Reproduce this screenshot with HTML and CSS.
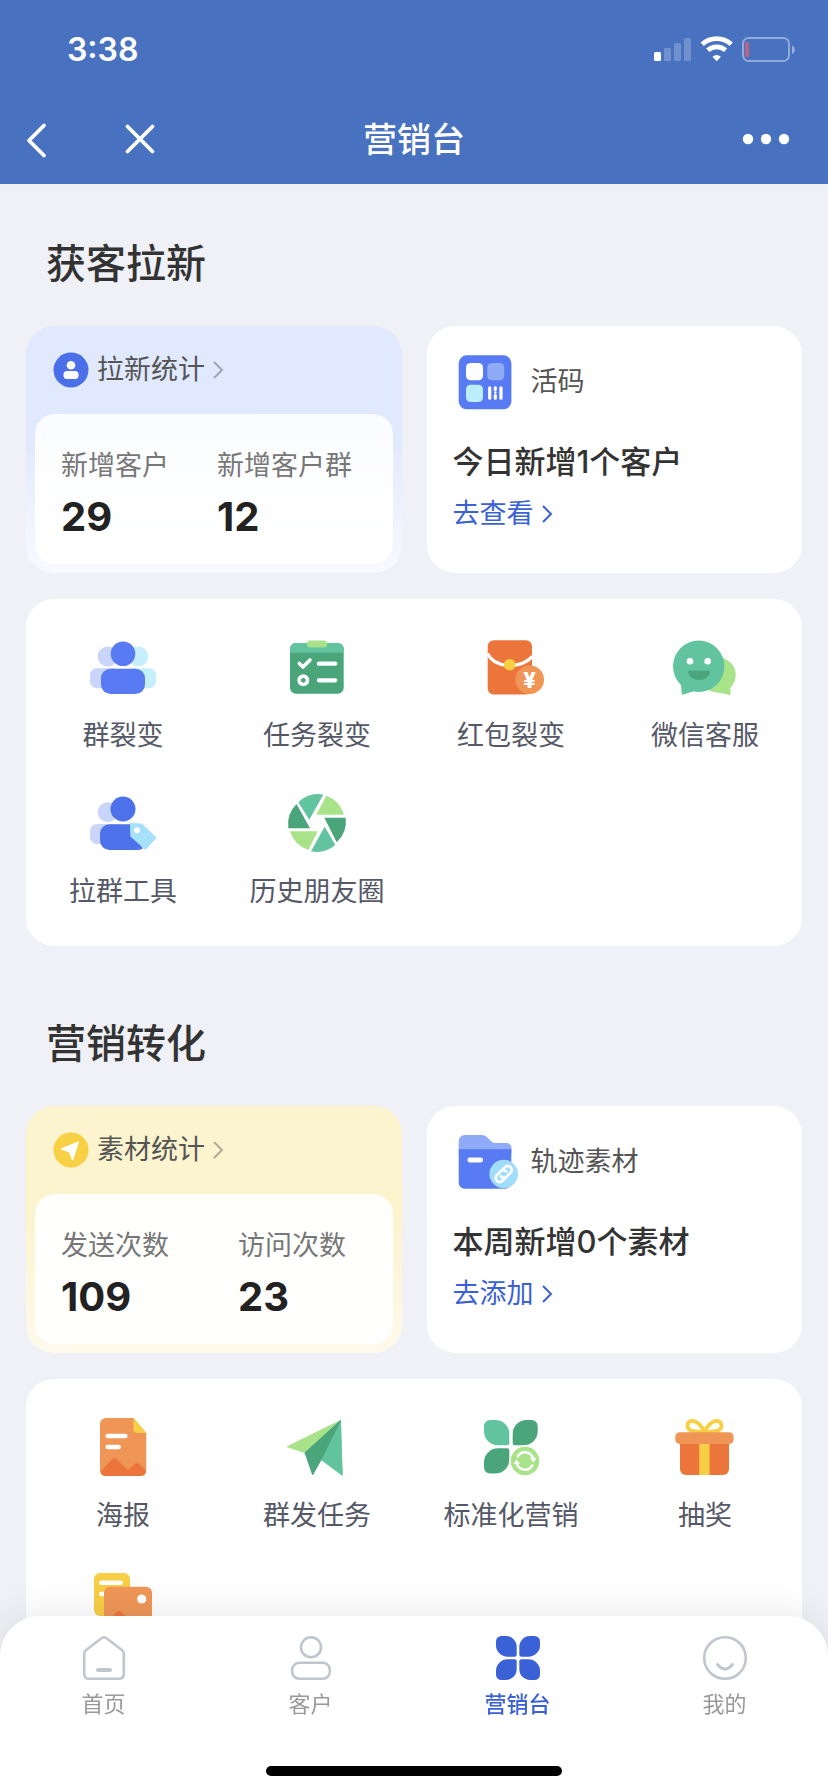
FILE: index.html
```html
<!DOCTYPE html>
<html lang="zh-CN">
<head>
<meta charset="utf-8">
<meta name="viewport" content="width=device-width, initial-scale=1">
<title>营销台</title>
<link rel="stylesheet" href="styles.css">
</head>
<body>
<div class="app">
  <header class="header">
    <div class="status">
      <span class="status-time">3:38</span>
      <svg class="status-icons" viewBox="0 0 142 28" aria-hidden="true">
        <rect x="0" y="16" width="7" height="9" rx="1.5" fill="#fff"/>
        <g fill="#fff" opacity=".22">
          <rect x="10" y="12" width="7" height="13" rx="1.5"/>
          <rect x="20" y="7" width="7" height="18" rx="1.5"/>
          <rect x="30" y="2" width="7" height="23" rx="1.5"/>
        </g>
        <g fill="none" stroke="#fff" stroke-width="4.800">
          <path d="M48.200 8.200A21.500 21.500 0 0 1 77.200 8.200"/>
          <path d="M53.800 14.300A13 13 0 0 1 71.600 14.300"/>
        </g>
        <path d="M62.700 25.200L58.500 20.700A6.500 6.500 0 0 1 66.900 20.700Z" fill="#fff"/>
        <rect x="89" y="2" width="46" height="23" rx="5.500" fill="none" stroke="#fff" stroke-opacity=".4" stroke-width="2"/>
        <path d="M138 9.500a4.600 4.600 0 0 1 0 8.500z" fill="#fff" opacity=".45"/>
        <rect x="91" y="6" width="4" height="15" rx="1" fill="#b8657f"/>
      </svg>
    </div>
    <div class="nav">
      <div class="nav-side">
        <button class="icon-btn" type="button" aria-label="返回">
          <svg viewBox="0 0 36 36"><path d="M26 3.500L11 18.500L26 33.500" fill="none" stroke="#fff" stroke-width="3.800" stroke-linecap="round" stroke-linejoin="round"/></svg>
        </button>
        <button class="icon-btn" type="button" aria-label="关闭">
          <svg viewBox="0 0 36 36"><path d="M5.500 4.500L30.500 29.500M30.500 4.500L5.500 29.500" fill="none" stroke="#fff" stroke-width="3.800" stroke-linecap="round"/></svg>
        </button>
      </div>
      <h1 class="nav-title">营销台</h1>
      <div class="nav-side nav-side-end">
        <button class="icon-btn icon-btn-wide" type="button" aria-label="更多">
          <svg viewBox="0 0 48 36"><g fill="#fff"><circle cx="6" cy="17" r="5.200"/><circle cx="24" cy="17" r="5.200"/><circle cx="42" cy="17" r="5.200"/></g></svg>
        </button>
      </div>
    </div>
  </header>

  <main class="content">
    <section class="section">
      <h2 class="section-title">获客拉新</h2>
      <div class="summary-row">
        <article class="stat-card stat-card-blue">
          <a class="stat-head" href="#">
            <svg class="stat-icon" viewBox="0 0 36 36" aria-hidden="true"><circle cx="18" cy="18" r="17.500" fill="#4a6fe9"/><circle cx="18" cy="13.300" r="4.300" fill="#fff"/><rect x="10.500" y="19" width="15" height="8" rx="3.500" fill="#fff"/></svg>
            <span>拉新统计</span>
            <svg class="chevron chevron-muted" viewBox="0 0 10 18" aria-hidden="true"><path d="M1 1L9 9L1 17"/></svg>
          </a>
          <dl class="stat-panel">
            <div class="stat"><dt>新增客户</dt><dd>29</dd></div>
            <div class="stat"><dt>新增客户群</dt><dd>12</dd></div>
          </dl>
        </article>
        <article class="info-card">
          <div class="info-head">
            <svg class="info-icon" viewBox="0 0 64 64" aria-hidden="true">
              <rect x="5.700" y="5.300" width="52.700" height="54" rx="8" fill="#587af2"/>
              <rect x="13" y="13" width="17" height="17.300" rx="4.500" fill="#fff"/>
              <rect x="34.300" y="13" width="17" height="17.300" rx="4.500" fill="#8faaf7"/>
              <rect x="13" y="34.700" width="17" height="17.300" rx="4.500" fill="#bbeefc"/>
              <path d="M36.700 37.800V48.200M48 37.800V48.200M42.300 37.800V39.500M42.300 45.500V48.200" stroke="#fff" stroke-width="3.200" stroke-linecap="round"/>
              <circle cx="42.300" cy="42.500" r="1.300" fill="#fff"/>
            </svg>
            <span>活码</span>
          </div>
          <h3 class="info-title">今日新增1个客户</h3>
          <a class="info-link" href="#">去查看<svg class="chevron" viewBox="0 0 10 18" aria-hidden="true"><path d="M1 1L9 9L1 17"/></svg></a>
        </article>
      </div>
      <nav class="tools" aria-label="获客拉新">
        <a class="tool" href="#">
          <svg viewBox="0 0 68 68" aria-hidden="true">
            <circle cx="18.700" cy="23.500" r="10" fill="#c9d5fa"/><rect x="1" y="35.300" width="30" height="20" rx="7" fill="#c9d5fa"/>
            <circle cx="49.300" cy="23.500" r="10" fill="#c6effd"/><rect x="37" y="35.300" width="30" height="20" rx="7" fill="#c6effd"/>
            <circle cx="34" cy="20.700" r="12.300" fill="#587af2"/><rect x="12" y="35.700" width="44" height="25.300" rx="9.500" fill="#587af2"/>
          </svg>
          <span>群裂变</span>
        </a>
        <a class="tool" href="#">
          <svg viewBox="0 0 68 68" aria-hidden="true">
            <rect x="7" y="10" width="53.700" height="50.700" rx="6" fill="#4aa57b"/>
            <path d="M7 19.700V16a6 6 0 0 1 6-6H54.700a6 6 0 0 1 6 6v3.700z" fill="#61c49e"/>
            <rect x="24" y="7.500" width="20" height="7" rx="3" fill="#a8e389"/>
            <g fill="none" stroke="#fff" stroke-width="3.600" stroke-linecap="round" stroke-linejoin="round"><path d="M16.300 30.500L20 34L27 27"/><circle cx="20.300" cy="47.300" r="4.200"/><path d="M35.800 30.700H52.300M35.800 47.300H52.300" stroke-width="4.200"/></g>
          </svg>
          <span>任务裂变</span>
        </a>
        <a class="tool" href="#">
          <svg viewBox="0 0 68 68" aria-hidden="true">
            <rect x="10.700" y="7.300" width="44.300" height="54.300" rx="6" fill="#ec753c"/>
            <path d="M10.500 20.500C17 34.500 42 37 55.500 23.500" fill="none" stroke="#fff" stroke-width="3.200"/>
            <circle cx="32.700" cy="31.700" r="5.800" fill="#f7cf45"/>
            <circle cx="52.700" cy="46.700" r="14.300" fill="#ef9657"/>
            <text class="coin-mark" x="52.700" y="54.500" text-anchor="middle">¥</text>
          </svg>
          <span>红包裂变</span>
        </a>
        <a class="tool" href="#">
          <svg viewBox="0 0 68 68" aria-hidden="true">
            <circle cx="47" cy="42" r="17.700" fill="#a8e389"/><path d="M48 59L59 61.500L58.500 50Z" fill="#a8e389" stroke="#a8e389" stroke-linejoin="round"/>
            <circle cx="27.700" cy="33.300" r="25.700" fill="#61c49e"/><path d="M10.500 50L11.300 61.300L22 58Z" fill="#61c49e" stroke="#61c49e" stroke-linejoin="round"/>
            <circle cx="19" cy="28.300" r="3.300" fill="#fff"/><circle cx="36.700" cy="28.300" r="3.300" fill="#fff"/>
            <path d="M17 37.700H39C38.500 50 17.500 50 17 37.700Z" fill="#4aa57b"/>
          </svg>
          <span>微信客服</span>
        </a>
        <a class="tool" href="#">
          <svg viewBox="0 0 68 68" aria-hidden="true">
            <circle cx="18.700" cy="23.300" r="10" fill="#c9d5fa"/><rect x="1" y="35" width="30" height="20" rx="7" fill="#c9d5fa"/>
            <circle cx="34" cy="20" r="12.500" fill="#4d71e8"/><path d="M20.500 35.300H44V46L54 59.500Q51 61 47 61H20.500A9.500 9.500 0 0 1 11 51.500V44.800A9.500 9.500 0 0 1 20.500 35.300Z" fill="#4d71e8"/>
            <path d="M42 35L52.500 35.500L66.300 48.700L56.300 59.500L42.300 47Z" fill="#a5e1fb" stroke="#a5e1fb" stroke-width="2" stroke-linejoin="round"/>
            <circle cx="48" cy="41.300" r="3" fill="#fff"/>
          </svg>
          <span>拉群工具</span>
        </a>
        <a class="tool" href="#">
          <svg viewBox="0 0 68 68" aria-hidden="true">
            <path d="M15.300 13.300A29 29 0 0 1 40.300 5.500L26.300 30.700Z" fill="#61c49e"/>
            <path d="M43.300 6.800A29 29 0 0 1 61 25.700H33.300Z" fill="#a8e389"/>
            <path d="M62.700 28.700A29 29 0 0 1 53.700 53.300L41.300 28.700Z" fill="#4aa57b"/>
            <path d="M52.300 56A29 29 0 0 1 28 62.300L41.700 37.700Z" fill="#61c49e"/>
            <path d="M25.300 61A29 29 0 0 1 7 42.300H34.700Z" fill="#a8e389"/>
            <path d="M5.300 39.300A29 29 0 0 1 13.500 15L27 39.300Z" fill="#4aa57b"/>
          </svg>
          <span>历史朋友圈</span>
        </a>
      </nav>
    </section>

    <section class="section">
      <h2 class="section-title">营销转化</h2>
      <div class="summary-row">
        <article class="stat-card stat-card-yellow">
          <a class="stat-head" href="#">
            <svg class="stat-icon" viewBox="0 0 36 36" aria-hidden="true"><circle cx="18" cy="18" r="17.500" fill="#f8d044"/><path d="M8.800 17L25.200 10.200L19.600 27.500L16.500 19.800Z" fill="#fff" stroke="#fff" stroke-width="1.500" stroke-linejoin="round"/></svg>
            <span>素材统计</span>
            <svg class="chevron chevron-muted" viewBox="0 0 10 18" aria-hidden="true"><path d="M1 1L9 9L1 17"/></svg>
          </a>
          <dl class="stat-panel stat-panel-loose">
            <div class="stat"><dt>发送次数</dt><dd>109</dd></div>
            <div class="stat"><dt>访问次数</dt><dd>23</dd></div>
          </dl>
        </article>
        <article class="info-card">
          <div class="info-head">
            <svg class="info-icon" viewBox="0 0 64 64" aria-hidden="true">
              <path d="M5.700 24V11a6 6 0 0 1 6-6H29Q31.500 5 33.500 6.700L38.500 11.500Q40 13 42.500 13H53.500a5 5 0 0 1 5 5V24Z" fill="#8faaf7"/>
              <path d="M5.700 19.300H58.300V52.700a6 6 0 0 1-6 6H11.700a6 6 0 0 1-6-6Z" fill="#587af2"/>
              <path d="M16.800 30H27.700" stroke="#fff" stroke-width="4.800" stroke-linecap="round"/>
              <circle cx="50.700" cy="44" r="14.300" fill="#9fddfa"/>
              <g transform="rotate(-45 50.700 44)" fill="none" stroke="#fff" stroke-width="2.800" stroke-linecap="round"><path d="M48.300 48H45a4 4 0 0 1 0-8h5.500a4 4 0 0 1 3.800 4"/><path d="M53.100 40H56.400a4 4 0 0 1 0 8h-5.500a4 4 0 0 1-3.800-4"/></g>
            </svg>
            <span>轨迹素材</span>
          </div>
          <h3 class="info-title">本周新增0个素材</h3>
          <a class="info-link" href="#">去添加<svg class="chevron" viewBox="0 0 10 18" aria-hidden="true"><path d="M1 1L9 9L1 17"/></svg></a>
        </article>
      </div>
      <nav class="tools" aria-label="营销转化">
        <a class="tool" href="#">
          <svg viewBox="0 0 68 68" aria-hidden="true">
            <path d="M17 5H44.500L57.300 20V57a6 6 0 0 1-6 6H17a6 6 0 0 1-6-6V11a6 6 0 0 1 6-6Z" fill="#ef9657"/>
            <path d="M44.500 5L57.300 20H48a3.500 3.500 0 0 1-3.500-3.500Z" fill="#f7cf45"/>
            <path d="M18.700 23H36.300M18.700 34H29.700" stroke="#fff" stroke-width="4.600" stroke-linecap="round"/>
            <path d="M11.500 58.800L22.800 46.200Q25.300 43.700 27.800 46.200L39.300 57L45.300 51Q47.700 49 50 51L57 57.500Q57 63 51.300 63H17Q12 63 11.500 58.800Z" fill="#ec753c"/>
          </svg>
          <span>海报</span>
        </a>
        <a class="tool" href="#">
          <svg viewBox="0 0 68 68" aria-hidden="true">
            <g stroke-width="1" stroke-linejoin="round">
              <path d="M57.500 7.500L59.300 62.300L38.300 46.700Z" fill="#61c49e" stroke="#61c49e"/>
              <path d="M57.500 7.500L22 39.700L4.200 33.700Z" fill="#a8e389" stroke="#a8e389"/>
              <path d="M57.500 7.500L22 39.700L29.700 61.800L38.300 46.200Z" fill="#4aa57b" stroke="#4aa57b"/>
            </g>
          </svg>
          <span>群发任务</span>
        </a>
        <a class="tool" href="#">
          <svg viewBox="0 0 68 68" aria-hidden="true">
            <path d="M13 7H18.300a14 14 0 0 1 14 14V30.300a2 2 0 0 1-2 2H21a14 14 0 0 1-14-14V13a6 6 0 0 1 6-6Z" fill="#61c49e"/>
            <path d="M49.700 7H54.700a6 6 0 0 1 6 6V18.300a14 14 0 0 1-14 14H37.700a2 2 0 0 1-2-2V21a14 14 0 0 1 14-14Z" fill="#4aa57b"/>
            <path d="M21 35.300H30.300a2 2 0 0 1 2 2V46.600a14 14 0 0 1-14 14H13a6 6 0 0 1-6-6V49.300a14 14 0 0 1 14-14Z" fill="#4aa57b"/>
            <circle cx="48" cy="48" r="15.500" fill="#fff"/><circle cx="48" cy="48" r="14.300" fill="#a8e389"/>
            <path d="M40.700 43.500A8.500 8.500 0 0 1 56.300 46M55.300 52.500A8.500 8.500 0 0 1 39.700 50" fill="none" stroke="#fff" stroke-width="2.600" stroke-linecap="round"/>
            <path d="M53 45.300H59.500L56.500 49.500ZM43 50.700H36.500L39.500 46.500Z" fill="#fff"/>
          </svg>
          <span>标准化营销</span>
        </a>
        <a class="tool" href="#">
          <svg viewBox="0 0 68 68" aria-hidden="true">
            <path d="M33.500 19C31 13 26 7.700 21 7.800C15.500 8.500 15 15 19.500 17.300C23 19 28 18.500 33.500 19C36 13 41 7.700 46 7.800C51.500 8.500 52 15 47.500 17.300C44 19 39 18.500 33.500 19Z" fill="none" stroke="#f7cf45" stroke-width="3.800" stroke-linejoin="round"/>
            <path d="M9 28H58V56a6 6 0 0 1-6 6H15a6 6 0 0 1-6-6Z" fill="#ec753c"/>
            <rect x="28.300" y="30" width="10.300" height="32" fill="#f7cf45"/>
            <rect x="4.300" y="19.300" width="58.300" height="11.700" rx="4.500" fill="#ef9657"/>
          </svg>
          <span>抽奖</span>
        </a>
        <a class="tool" href="#" aria-label="更多工具">
          <svg viewBox="0 0 68 68" aria-hidden="true">
            <rect x="5" y="4" width="36" height="43" rx="6" fill="#f7cf45"/>
            <path d="M12.300 13.700H31.700M12.300 25H20" stroke="#fff" stroke-width="4.600" stroke-linecap="round"/>
            <rect x="15" y="17.700" width="48" height="46" rx="6" fill="#ef9657"/>
            <circle cx="52.700" cy="30" r="4.600" fill="#fff"/>
            <path d="M15 57L27 43.500Q30 40.500 33 43.500L50 63H21Q15 63 15 57Z" fill="#ec753c"/>
          </svg>
        </a>
      </nav>
    </section>
  </main>

  <nav class="tabbar" aria-label="主导航">
    <div class="tabs">
      <a class="tab" href="#">
        <svg viewBox="0 0 44 44" aria-hidden="true"><g fill="none" stroke="#bfc6cf" stroke-width="2.600" stroke-linejoin="round"><path d="M2.200 17.500Q2.200 15.500 3.800 14.200L19.800 2Q22 .5 24.200 2L40.200 14.200Q41.800 15.500 41.800 17.500V37.800Q41.800 42.800 36.800 42.800H7.200Q2.200 42.800 2.200 37.800Z"/><path d="M16 34H28" stroke-width="4" stroke-linecap="round"/></g></svg>
        <span>首页</span>
      </a>
      <a class="tab" href="#">
        <svg viewBox="0 0 44 44" aria-hidden="true"><g fill="none" stroke="#bfc6cf" stroke-width="2.600"><circle cx="22" cy="11.200" r="10"/><rect x="3.200" y="26.800" width="37.600" height="16" rx="7"/></g></svg>
        <span>客户</span>
      </a>
      <a class="tab tab-active" href="#" aria-current="page">
        <svg viewBox="0 0 44 44" aria-hidden="true"><g fill="#3a61d6"><path d="M5.500 0H10A10.700 10.700 0 0 1 20.700 10.700V18.700a2 2 0 0 1-2 2H11.500A11.500 11.500 0 0 1 0 9.200V5.500A5.500 5.500 0 0 1 5.500 0Z"/><path d="M38.500 0H34A10.700 10.700 0 0 0 23.300 10.700V18.700a2 2 0 0 0 2 2H32.500A11.500 11.500 0 0 0 44 9.200V5.500A5.500 5.500 0 0 0 38.500 0Z"/><path d="M5.500 44H10A10.700 10.700 0 0 0 20.700 33.300V25.300a2 2 0 0 0-2-2H11.500A11.500 11.500 0 0 0 0 34.800V38.500A5.500 5.500 0 0 0 5.500 44Z"/><path d="M38.500 44H34A10.700 10.700 0 0 1 23.300 33.300V25.300a2 2 0 0 1 2-2H32.500A11.500 11.500 0 0 1 44 34.800V38.500A5.500 5.500 0 0 1 38.500 44Z"/></g></svg>
        <span>营销台</span>
      </a>
      <a class="tab" href="#">
        <svg viewBox="0 0 44 44" aria-hidden="true"><g fill="none" stroke="#bfc6cf" stroke-width="2.600" stroke-linecap="round"><circle cx="22" cy="22" r="20.800"/><path d="M14.500 28.500Q22 37.500 29.500 28.500" stroke-width="3"/></g></svg>
        <span>我的</span>
      </a>
    </div>
    <div class="home-indicator"></div>
  </nav>
</div>
</body>
</html>
```
FILE: styles.css
```css
* {
  box-sizing: border-box;
  margin: 0;
  padding: 0;
}

body {
  background: #eff1f6;
  color: #333;
  font-family: Inter, "Noto Sans CJK SC", sans-serif;
  font-size: 27px;
  line-height: 36px;
}

a {
  color: inherit;
  text-decoration: none;
}

svg {
  display: block;
  flex: none;
  overflow: visible;
}

.app {
  display: flex;
  flex-direction: column;
  height: 100vh;
  overflow: hidden;
}

/* Header */

.header {
  flex: none;
  background: #4872c0;
  color: #fff;
}

.status {
  display: flex;
  align-items: center;
  justify-content: space-between;
  height: 96px;
  padding: 4px 32px 0 67px;
}

.status-time {
  font-size: 32px;
  font-weight: 600;
  line-height: 40px;
}

.status-icons {
  width: 142px;
  height: 28px;
}

.nav {
  display: flex;
  align-items: center;
  height: 88px;
  padding: 0 18px;
}

.nav-side {
  display: flex;
  flex: 1;
  gap: 68px;
}

.nav-side-end {
  justify-content: flex-end;
}

.nav-title {
  font-size: 34px;
  font-weight: 500;
  line-height: 48px;
}

.icon-btn {
  width: 36px;
  height: 36px;
  border: 0;
  background: none;
}

.icon-btn svg {
  width: 100%;
  height: 100%;
}

.icon-btn-wide {
  width: 48px;
  margin-right: 20px;
}

/* Content */

.content {
  display: flex;
  flex: 1;
  flex-direction: column;
  gap: 70px;
  min-height: 0;
  padding: 52px 26px 200px;
  overflow-y: auto;
  scrollbar-width: none;
}

.section {
  flex: none;
}

.section-title {
  margin-bottom: 34px;
  padding-left: 20px;
  font-size: 40px;
  font-weight: 500;
  line-height: 56px;
}

.summary-row {
  display: grid;
  grid-template-columns: 1fr 1fr;
  gap: 25px;
  margin-bottom: 26px;
}

.stat-card,
.info-card,
.tools {
  border-radius: 28px;
}

.stat-card {
  display: flex;
  flex-direction: column;
  padding: 0 9px 9px;
}

.stat-card-blue {
  background: linear-gradient(#e0e9fd 45%, #f8faff);
}

.stat-card-yellow {
  background: linear-gradient(#fcf3cf 45%, #fefaec);
}

.stat-head {
  display: flex;
  align-items: center;
  height: 88px;
  padding-left: 18px;
  color: #555;
}

.stat-icon {
  width: 36px;
  height: 36px;
  margin-right: 8px;
}

.chevron {
  width: 10px;
  height: 18px;
  margin-left: 8px;
  fill: none;
  stroke: currentColor;
  stroke-width: 2;
}

.chevron-muted {
  opacity: .45;
}

.stat-panel {
  display: flex;
  flex: 1;
  gap: 48px;
  padding: 34px 18px 23px 26px;
  border-radius: 20px;
  background: linear-gradient(rgba(255, 255, 255, .86), #fff);
}

.stat-panel-loose {
  gap: 69px;
  background: rgba(255, 255, 255, .94);
}

.stat dt {
  margin-bottom: 9px;
  color: #777;
}

.stat dd {
  color: #222;
  font-size: 40px;
  font-weight: 700;
  line-height: 48px;
}

.info-card {
  padding: 24px 26px;
  background: #fff;
}

.info-head {
  display: flex;
  align-items: center;
  gap: 14px;
  margin-bottom: 26px;
  color: #555;
}

.info-icon {
  width: 64px;
  height: 64px;
}

.info-title {
  margin-bottom: 12px;
  font-size: 31px;
  font-weight: 500;
  line-height: 44px;
}

.info-link {
  display: inline-flex;
  align-items: center;
  color: #3a61d6;
}

/* Tool grid */

.tools {
  display: grid;
  grid-template-columns: repeat(4, 1fr);
  row-gap: 35px;
  padding: 34px 0 36px;
  background: #fff;
}

.tool {
  display: flex;
  flex-direction: column;
  align-items: center;
  gap: 17px;
  color: #555866;
  white-space: nowrap;
}

.tool svg {
  width: 68px;
  height: 68px;
}

.coin-mark {
  fill: #fff;
  font-size: 22px;
  font-weight: 800;
}

/* Bottom tab bar */

.tabbar {
  position: fixed;
  right: 0;
  bottom: 0;
  left: 0;
  padding: 20px 0 16px;
  border-radius: 40px 40px 0 0;
  background: #fff;
  box-shadow: 0 0 40px rgba(0, 0, 0, .1);
}

.tabs {
  display: grid;
  grid-template-columns: repeat(4, 1fr);
  margin-bottom: 46px;
}

.tab {
  display: flex;
  flex-direction: column;
  align-items: center;
  gap: 8px;
  color: #999;
  font-size: 22px;
  line-height: 32px;
}

.tab svg {
  width: 44px;
  height: 44px;
}

.tab-active {
  color: #3a61d6;
  font-weight: 500;
}

.home-indicator {
  width: 296px;
  height: 10px;
  margin: 0 auto;
  border-radius: 5px;
  background: #000;
}
```
